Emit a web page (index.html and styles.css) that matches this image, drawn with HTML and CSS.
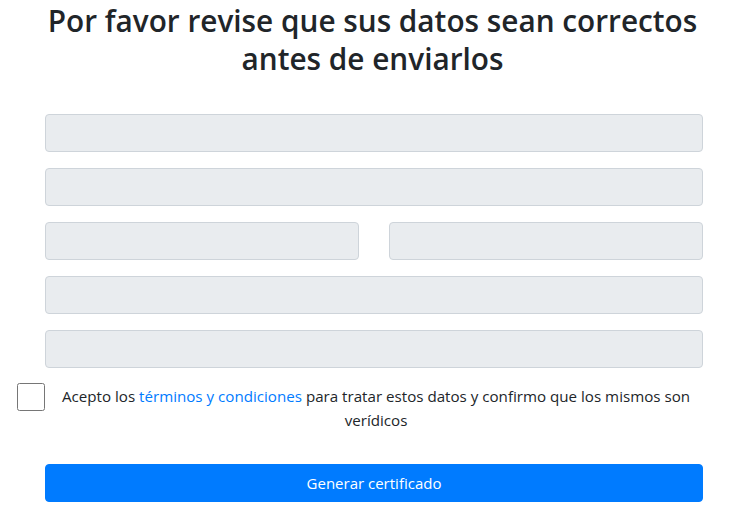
FILE: index.html
```html
<!DOCTYPE html>
<html lang="es">
<head>
<meta charset="utf-8">
<title>Revisión de datos</title>
<link rel="stylesheet" href="styles.css">
</head>
<body>
<main class="page">
  <h2 class="title">Por favor revise que sus datos sean correctos antes de enviarlos</h2>
  <form class="form">
    <input class="field" type="text" disabled>
    <input class="field" type="text" disabled>
    <div class="row">
      <input class="field" type="text" disabled>
      <input class="field" type="text" disabled>
    </div>
    <input class="field" type="text" disabled>
    <input class="field" type="text" disabled>
    <div class="check-row">
      <input class="check" type="checkbox" id="acepto">
      <label class="check-label" for="acepto">Acepto los <a class="link" href="#">términos y condiciones</a> para tratar estos datos y confirmo que los mismos son verídicos</label>
    </div>
    <button class="submit" type="button">Generar certificado</button>
  </form>
</main>
</body>
</html>
```
FILE: styles.css
```css
* { box-sizing: border-box; }
html, body { margin: 0; padding: 0; background: #fff; }
body {
  font-family: "Open Sans", "Noto Sans", sans-serif;
  font-size: 16px;
  line-height: 1.5;
  color: #212529;
}
.page { width: 745px; }
.title {
  margin: 0;
  padding: 2px 40px 0 40px;
  font-size: 29.75px;
  font-weight: 600;
  line-height: 38px;
  text-align: center;
  color: #212529;
}
.form {
  display: flex;
  flex-direction: column;
  gap: 16px;
  padding: 36px 42px 0 17px;
}
.field {
  display: block;
  width: 658px;
  height: 38px;
  margin-left: 28px;
  background: #e9ecef;
  border: 1px solid #ced4da;
  border-radius: 4px;
  font: inherit;
}
.row {
  display: flex;
  gap: 30px;
  margin-left: 28px;
  width: 658px;
}
.row .field { width: 314px; margin-left: 0; }
.check-row {
  display: flex;
  align-items: flex-start;
  margin-right: -4px;
}
.check {
  width: 28px;
  height: 28px;
  margin: -1px 0 0 0;
  flex: none;
}
.check-label {
  flex: 1;
  text-align: center;
  font-size: 15.15px;
  line-height: 24px;
}
.link { color: #007bff; text-decoration: none; }
.submit {
  margin: 16px 0 0 28px;
  width: 658px;
  height: 38px;
  background: #007bff;
  border: 1px solid #007bff;
  border-radius: 4px;
  color: #fff;
  font: inherit;
  font-size: 15px;
}
```
